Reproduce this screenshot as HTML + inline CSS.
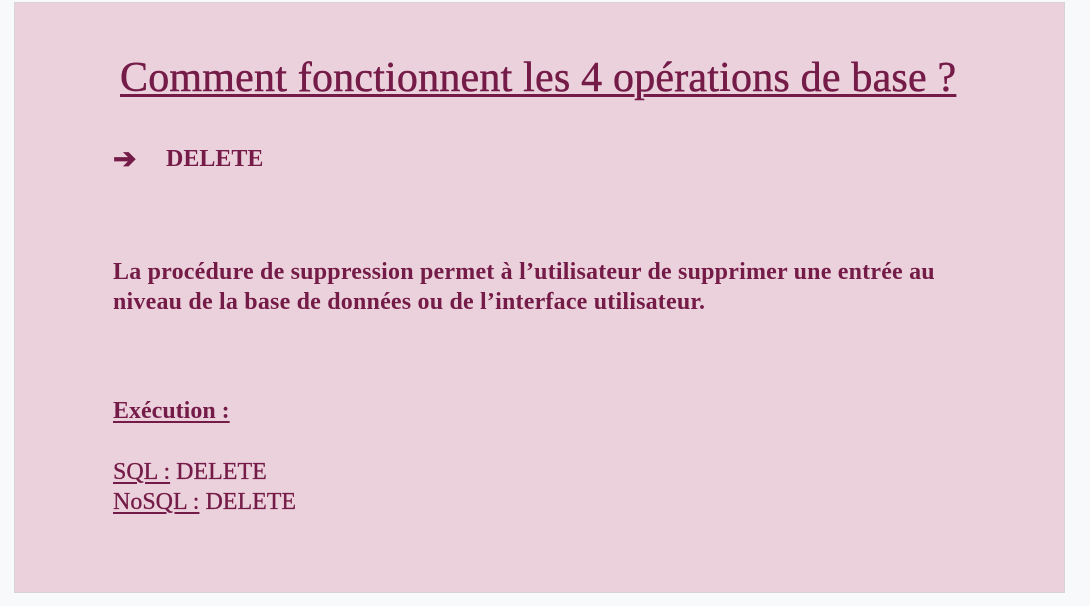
<!DOCTYPE html>
<html><head><meta charset="utf-8"><style>
html,body{margin:0;padding:0;width:1090px;height:606px;background:#f8f9fa;overflow:hidden}
.slide{position:absolute;left:14px;top:2px;width:1051px;height:591px;background:#ebd1dc;border:1px solid #d8d4d6;box-sizing:border-box}
.t{position:absolute;white-space:nowrap;color:#741b47;font-family:"Liberation Serif",serif;}
u{text-decoration-thickness:2px;text-underline-offset:3px}
</style></head><body>
<div class="slide"></div>
<div class="t" style="left:120px;top:54px;font-size:42px;letter-spacing:0.2px;-webkit-text-stroke:0.5px #741b47"><u style="text-decoration-thickness:3px">Comment fonctionnent les 4 opérations de base ?</u></div>
<div class="t" style="left:113px;top:142px;font-size:28px;font-weight:bold">➔</div>
<div class="t" style="left:166px;top:146px;font-size:24px;font-weight:bold">DELETE</div>
<div class="t" style="left:113px;top:257px;font-size:24px;font-weight:bold;line-height:30px;letter-spacing:0.2px">La procédure de suppression permet à l’utilisateur de supprimer une entrée au<br>niveau de la base de données ou de l’interface utilisateur.</div>
<div class="t" style="left:113px;top:398px;font-size:24px;font-weight:bold"><u>Exécution :</u></div>
<div class="t" style="left:113px;top:457px;font-size:24px;line-height:30px;-webkit-text-stroke:0.3px #741b47"><u>SQL :</u> DELETE<br><u>NoSQL :</u> DELETE</div>
</body></html>
